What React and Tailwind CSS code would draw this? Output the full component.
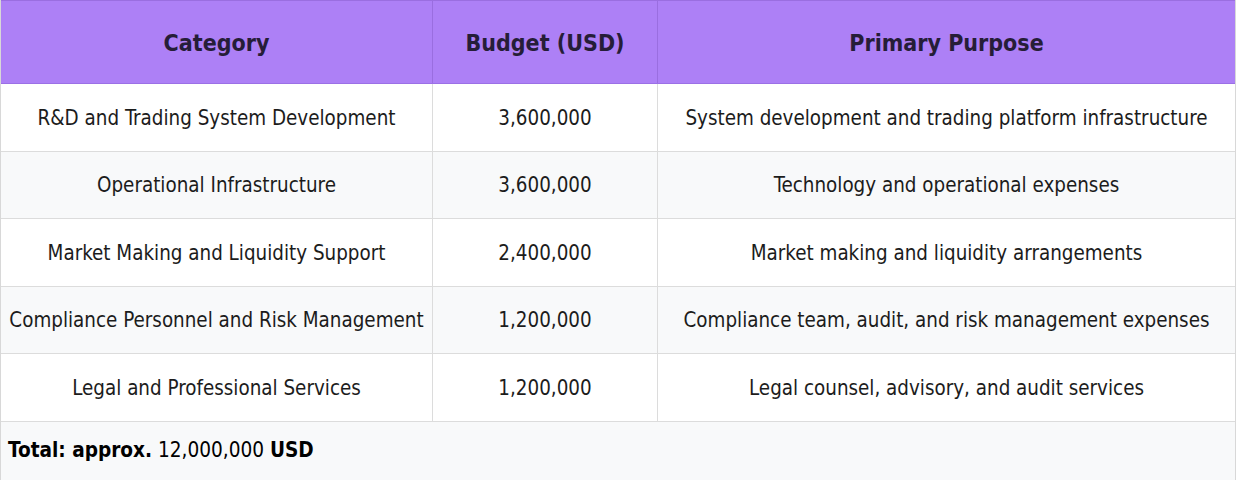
import React from "react";

const rows = [
  ["R&D and Trading System Development", "3,600,000", "System development and trading platform infrastructure"],
  ["Operational Infrastructure", "3,600,000", "Technology and operational expenses"],
  ["Market Making and Liquidity Support", "2,400,000", "Market making and liquidity arrangements"],
  ["Compliance Personnel and Risk Management", "1,200,000", "Compliance team, audit, and risk management expenses"],
  ["Legal and Professional Services", "1,200,000", "Legal counsel, advisory, and audit services"],
];

export default function App() {
  return (
    <div
      className="w-[1236px] h-[480px] bg-white text-[#1c1c1c] overflow-hidden"
      style={{ fontFamily: '"DejaVu Sans Condensed", "DejaVu Sans", Tahoma, sans-serif' }}
    >
      <div className="border border-[#d8d8d8] border-t-0">
        <div className="grid grid-cols-[432px_225px_1fr] h-[84px] bg-[#ad80f6] border-t border-[#9a6ee0] border-b border-b-[#9b70e6] text-[#261d38] font-bold text-[23px]">
          <div className="flex items-center justify-center pt-[2px] border-r border-[#9a6ee0]">Category</div>
          <div className="flex items-center justify-center pt-[2px] border-r border-[#9a6ee0]">Budget (USD)</div>
          <div className="flex items-center justify-center pt-[2px]">Primary Purpose</div>
        </div>
        {rows.map((r, i) => (
          <div
            key={i}
            className={`grid grid-cols-[432px_225px_1fr] h-[67.5px] border-b border-[#dcdcdc] text-[20.4px] ${i % 2 ? "bg-[#f8f9fa]" : "bg-white"}`}
          >
            <div className="flex items-center justify-center pt-[2px] border-r border-[#dcdcdc] whitespace-nowrap">{r[0]}</div>
            <div className="flex items-center justify-center pt-[2px] border-r border-[#dcdcdc]">{r[1]}</div>
            <div className="flex items-center justify-center pt-[2px] whitespace-nowrap">{r[2]}</div>
          </div>
        ))}
        <div className="h-[58px] bg-[#f8f9fa] flex items-center px-[7px] text-[20.6px] text-black">
          <span className="font-bold">Total: approx.</span>
          <span>&nbsp;12,000,000&nbsp;</span>
          <span className="font-bold">USD</span>
        </div>
      </div>
    </div>
  );
}
